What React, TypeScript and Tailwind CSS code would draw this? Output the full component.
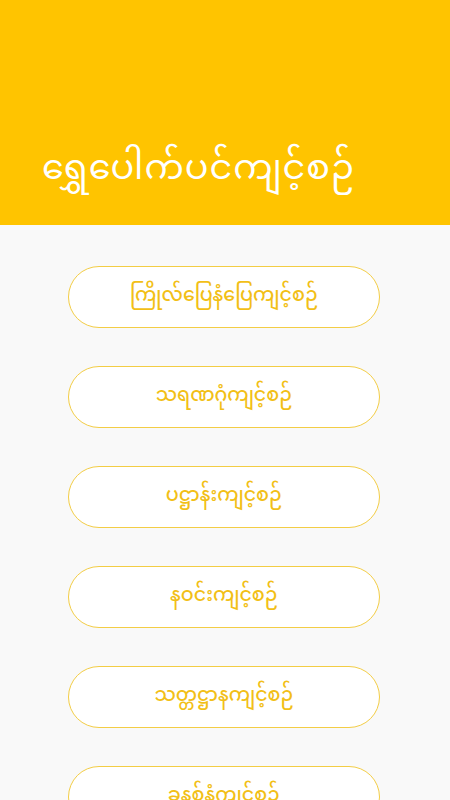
import React from 'react';

const items = [
  'ကြိုလ်ပြေနံပြေကျင့်စဉ်',
  'သရဏဂုံကျင့်စဉ်',
  'ပဋ္ဌာန်းကျင့်စဉ်',
  'နဝင်းကျင့်စဉ်',
  'သတ္တဋ္ဌာနကျင့်စဉ်',
  'ခုနစ်နံကျင့်စဉ်',
];

const font = { fontFamily: '"Noto Sans Myanmar", "Padauk", "Myanmar Text", "Noto Sans", sans-serif' };

export default function App() {
  return (
    <div className="w-[450px] h-[800px] overflow-hidden bg-[#f9f9f9]" style={font}>
      {/* Header */}
      <header className="h-[225px] bg-[#ffc400] flex items-end pl-[42px] pb-[32px]">
        <h1 className="text-white text-[35px] leading-[44px] tracking-[1px]">ရွှေပေါက်ပင်ကျင့်စဉ်</h1>
      </header>

      {/* Menu */}
      <div className="flex flex-col items-center gap-[38px] pt-[41px] pr-[2px]">
        {items.map((label, i) => (
          <button
            key={i}
            className="w-[312px] h-[62px] shrink-0 rounded-full bg-white border-[1.5px] border-[#f3cd45] text-[#f2bf17] text-[19px] font-medium flex items-center justify-center"
          >
            {label}
          </button>
        ))}
      </div>
    </div>
  );
}
